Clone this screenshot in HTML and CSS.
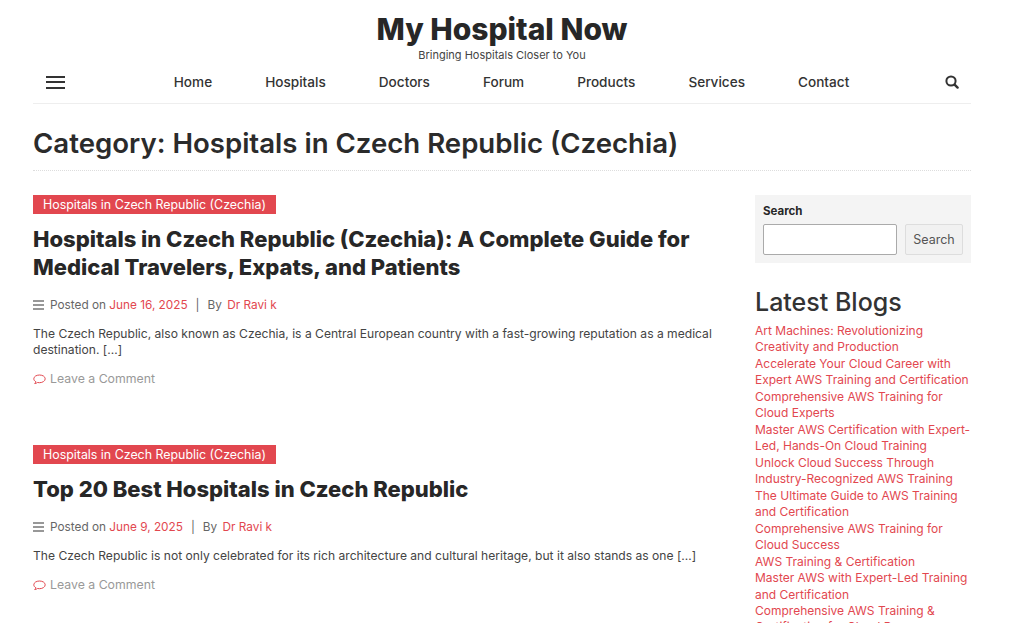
FILE: index.html
```html
<!DOCTYPE html>
<html lang="en">
<head>
    <meta charset="UTF-8">
    <meta name="viewport" content="width=device-width, initial-scale=1.0">
    <title>Hospitals in Czech Republic (Czechia) - My Hospital Now</title>
    <link rel="stylesheet" href="styles.css">
</head>
<body>
    <div class="wrapper">
        <header class="site-header">
            <div class="branding">
                <div class="site-title">My Hospital Now</div>
                <div class="site-tagline">Bringing Hospitals Closer to You</div>
            </div>
            <nav class="main-nav">
                <button class="menu-toggle" aria-label="Menu"><span></span><span></span><span></span></button>
                <ul class="nav-links">
                    <li><a href="#">Home</a></li>
                    <li><a href="#">Hospitals</a></li>
                    <li><a href="#">Doctors</a></li>
                    <li><a href="#">Forum</a></li>
                    <li><a href="#">Products</a></li>
                    <li><a href="#">Services</a></li>
                    <li><a href="#">Contact</a></li>
                </ul>
                <svg class="search-icon" viewBox="0 0 14 14" width="14" height="14">
                    <circle cx="6" cy="6" r="4.6" fill="none" stroke="#333" stroke-width="2"/>
                    <path d="M9.6 9.6l3 3" stroke="#333" stroke-width="2.4" stroke-linecap="round"/>
                </svg>
            </nav>
        </header>

        <h1 class="page-title">Category: Hospitals in Czech Republic (Czechia)</h1>

        <div class="columns">
            <main class="posts">
                <article class="post">
                    <a class="cat-label" href="#">Hospitals in Czech Republic (Czechia)</a>
                    <h2 class="post-title">Hospitals in Czech Republic (Czechia): A Complete Guide for Medical Travelers, Expats, and Patients</h2>
                    <div class="post-meta">
                        <svg class="meta-icon" viewBox="0 0 11 10" width="11" height="10"><path d="M0 1h11M0 5h11M0 9h11" stroke="#777" stroke-width="1.6"/></svg>
                        <span>Posted on <a href="#">June 16, 2025</a></span>
                        <span class="sep">|</span>
                        <span>By <a class="author" href="#">Dr Ravi k</a></span>
                    </div>
                    <p class="excerpt">The Czech Republic, also known as Czechia, is a Central European country with a fast-growing reputation as a medical destination. […]</p>
                    <a class="comment-link" href="#">
                        <svg viewBox="0 0 13 11" width="13" height="11"><path d="M6.5 1C3.4 1 .8 2.6.8 4.8c0 1.2.8 2.2 2 2.9-.2.7-.6 1.3-1.1 1.8 1 0 2-.4 2.8-1 .6.1 1.3.2 2 .2 3.1 0 5.7-1.7 5.7-3.9S9.6 1 6.5 1z" fill="none" stroke="#e2474f" stroke-width="1"/></svg>
                        Leave a Comment
                    </a>
                </article>

                <article class="post">
                    <a class="cat-label" href="#">Hospitals in Czech Republic (Czechia)</a>
                    <h2 class="post-title">Top 20 Best Hospitals in Czech Republic</h2>
                    <div class="post-meta">
                        <svg class="meta-icon" viewBox="0 0 11 10" width="11" height="10"><path d="M0 1h11M0 5h11M0 9h11" stroke="#777" stroke-width="1.6"/></svg>
                        <span>Posted on <a href="#">June 9, 2025</a></span>
                        <span class="sep">|</span>
                        <span>By <a class="author" href="#">Dr Ravi k</a></span>
                    </div>
                    <p class="excerpt">The Czech Republic is not only celebrated for its rich architecture and cultural heritage, but it also stands as one […]</p>
                    <a class="comment-link" href="#">
                        <svg viewBox="0 0 13 11" width="13" height="11"><path d="M6.5 1C3.4 1 .8 2.6.8 4.8c0 1.2.8 2.2 2 2.9-.2.7-.6 1.3-1.1 1.8 1 0 2-.4 2.8-1 .6.1 1.3.2 2 .2 3.1 0 5.7-1.7 5.7-3.9S9.6 1 6.5 1z" fill="none" stroke="#e2474f" stroke-width="1"/></svg>
                        Leave a Comment
                    </a>
                </article>
            </main>

            <aside class="sidebar">
                <div class="search-box">
                    <label for="s">Search</label>
                    <div class="search-row">
                        <input type="text" id="s">
                        <button>Search</button>
                    </div>
                </div>
                <h2 class="widget-title">Latest Blogs</h2>
                <ul class="blog-list">
                    <li><a href="#">Art Machines: Revolutionizing Creativity and Production</a></li>
                    <li><a href="#">Accelerate Your Cloud Career with Expert AWS Training and Certification</a></li>
                    <li><a href="#">Comprehensive AWS Training for Cloud Experts</a></li>
                    <li><a href="#">Master AWS Certification with Expert-Led, Hands-On Cloud Training</a></li>
                    <li><a href="#">Unlock Cloud Success Through Industry-Recognized AWS Training</a></li>
                    <li><a href="#">The Ultimate Guide to AWS Training and Certification</a></li>
                    <li><a href="#">Comprehensive AWS Training for Cloud Success</a></li>
                    <li><a href="#">AWS Training &amp; Certification</a></li>
                    <li><a href="#">Master AWS with Expert-Led Training and Certification</a></li>
                    <li><a href="#">Comprehensive AWS Training &amp; Certification for Cloud Pros</a></li>
                </ul>
            </aside>
        </div>
    </div>
</body>
</html>
```

FILE: styles.css
```css
* {
  box-sizing: border-box;
}

html,
body {
  height: 623px;
  overflow: hidden;
}

body {
  margin: 0;
  background-color: #fff;
  color: #333;
  font-family: Inter, "Open Sans", sans-serif;
  font-size: 13px;
}

a {
  color: #e2474f;
  text-decoration: none;
}

ul {
  list-style: none;
  margin: 0;
  padding: 0;
}

.wrapper {
  width: 938px;
  margin-left: 33px;
}

.branding {
  text-align: center;
  padding-top: 11px;
}

.site-title {
  font-size: 30px;
  font-weight: 800;
  line-height: 36px;
  color: #272727;
}

.site-tagline {
  font-size: 11px;
  line-height: 16px;
  color: #444;
}

.main-nav {
  display: flex;
  align-items: center;
  height: 41px;
  padding: 0 12px 2px 13px;
  border-bottom: 1px solid #eee;
}

.menu-toggle {
  display: flex;
  flex-direction: column;
  gap: 3.5px;
  width: 19px;
  padding: 0;
  border: none;
  background: none;
}

.menu-toggle span {
  height: 2px;
  background-color: #333;
}

.nav-links {
  flex: 1;
  display: flex;
  justify-content: center;
  gap: 53px;
  padding-left: 13px;
}

.nav-links a {
  color: #333;
  font-size: 13.6px;
  font-weight: 500;
}

.page-title {
  margin: 0;
  padding: 22px 0 10px;
  border-bottom: 1px dotted #ddd;
  color: #2b2b2b;
  font-size: 27.6px;
  font-weight: 600;
  line-height: 34px;
}

.columns {
  display: flex;
  justify-content: space-between;
  padding-top: 24px;
}

.posts {
  width: 692px;
}

.post {
  height: 250px;
}

.cat-label {
  display: inline-block;
  padding: 0 10px;
  background-color: #e2474f;
  color: #fff;
  font-size: 12.4px;
  line-height: 19px;
}

.post-title {
  margin: 11px 0 0;
  color: #272727;
  font-size: 22px;
  font-weight: 800;
  line-height: 28px;
}

.post-meta {
  display: flex;
  align-items: center;
  gap: 6px;
  margin-top: 14px;
  color: #666;
  font-size: 11.8px;
  line-height: 20px;
}

.post-meta .sep {
  margin: 0 2px;
}

.post-meta .author {
  margin-left: 2px;
}

.excerpt {
  margin: 11px 0 0;
  color: #444;
  font-size: 12.1px;
  line-height: 16px;
}

.comment-link {
  display: flex;
  align-items: center;
  gap: 4px;
  margin-top: 12px;
  color: #999;
  font-size: 12.3px;
  line-height: 18px;
}

.sidebar {
  width: 216px;
}

.search-box {
  padding: 9px 8px 8px 8px;
  background-color: #f4f4f4;
}

.search-box label {
  display: block;
  color: #272727;
  font-size: 11.5px;
  font-weight: 700;
  line-height: 14px;
}

.search-row {
  display: flex;
  gap: 8px;
  margin-top: 6px;
}

.search-row input {
  width: 134px;
  height: 31px;
  border: 1px solid #aaa;
  border-radius: 2px;
  background-color: #fff;
}

.search-row button {
  flex: 1;
  padding: 0;
  border: 1px solid #ddd;
  border-radius: 2px;
  background-color: #f1f1f1;
  color: #555;
  font-family: inherit;
  font-size: 12.5px;
}

.widget-title {
  margin: 22px 0 4px;
  color: #333;
  font-size: 25px;
  font-weight: 500;
  line-height: 34px;
}

.blog-list li {
  font-size: 12px;
  line-height: 16.47px;
}
```
